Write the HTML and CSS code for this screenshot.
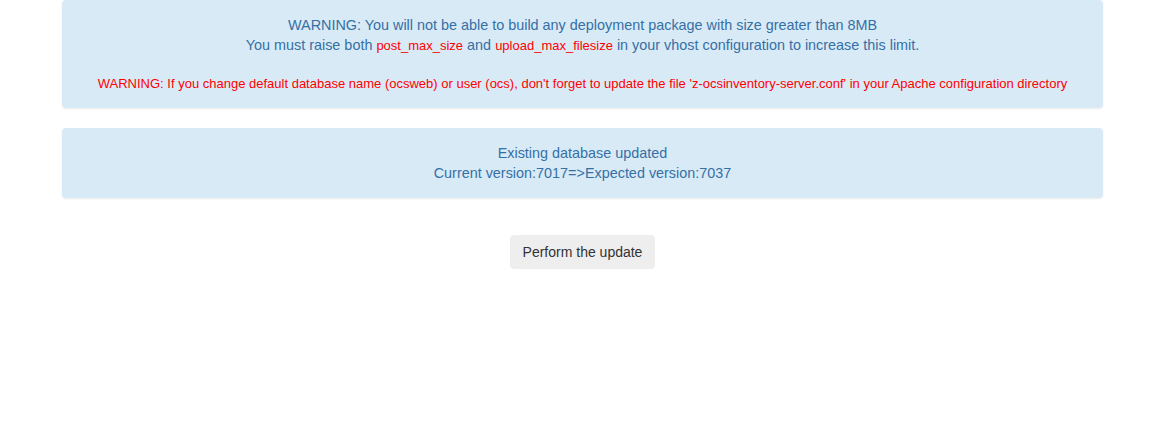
FILE: index.html
```html
<!DOCTYPE html>
<html lang="en">
<head>
<meta charset="utf-8">
<title>OCS Inventory update</title>
<link rel="stylesheet" href="styles.css">
</head>
<body>
<main class="page">
  <div class="alert">
    <div class="line">WARNING: You will not be able to build any deployment package with size greater than 8MB</div>
    <div class="line">You must raise both <span class="red-small">post_max_size</span> and <span class="red-small">upload_max_filesize</span> in your vhost configuration to increase this limit.</div>
    <div class="spacer"></div>
    <div class="red-line">WARNING: If you change default database name (ocsweb) or user (ocs), don't forget to update the file 'z-ocsinventory-server.conf' in your Apache configuration directory</div>
  </div>
  <div class="alert">
    <div class="line">Existing database updated</div>
    <div class="line">Current version:7017=&gt;Expected version:7037</div>
  </div>
  <div class="actions">
    <button class="btn" type="button">Perform the update</button>
  </div>
</main>
</body>
</html>
```
FILE: styles.css
```css
html, body {
  margin: 0;
  padding: 0;
  background: #ffffff;
}
body {
  font-family: "Liberation Sans", Arial, sans-serif;
  font-size: 14px;
  line-height: 20px;
  color: #333333;
}
.page {
  width: 1041px;
  margin-left: 62px;
}
.alert {
  background: #d9eaf7;
  color: #3570a5;
  border-radius: 4px;
  padding: 15px;
  margin-bottom: 20px;
  text-align: center;
  box-shadow: 0 1px 2px rgba(0, 0, 0, 0.08);
}
.line {
  height: 20px;
  font-size: 14.4px;
}
.spacer {
  height: 20px;
}
.red-small {
  color: #ff0000;
  font-size: 13px;
}
.red-line {
  color: #ff0000;
  font-size: 13px;
  line-height: 18px;
}
.actions {
  display: flex;
  justify-content: center;
  padding-top: 17px;
}
.btn {
  font-family: "Liberation Sans", Arial, sans-serif;
  font-size: 14px;
  line-height: 20px;
  color: #333333;
  background: #eeeeee;
  border: 1px solid #eeeeee;
  border-radius: 4px;
  padding: 6px 12px;
  cursor: pointer;
}
```
